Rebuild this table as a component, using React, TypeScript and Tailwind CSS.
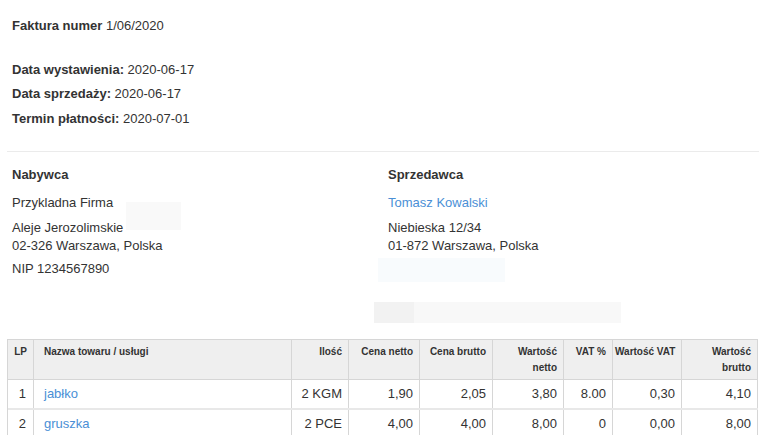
const rows = [
  { lp: '1', name: 'jabłko', qty: '2 KGM', net: '1,90', gross: '2,05', valNet: '3,80', vat: '8.00', valVat: '0,30', valGross: '4,10' },
  { lp: '2', name: 'gruszka', qty: '2 PCE', net: '4,00', gross: '4,00', valNet: '8,00', vat: '0', valVat: '0,00', valGross: '8,00' },
];

const cols = 'grid grid-cols-[26px_258px_57px_71px_73px_71px_49px_69px_76px]';

function Party({ title, lines }: { title: string; lines: React.ReactNode[] }) {
  return (
    <div className="flex-1 px-[5px]">
      <div className="font-bold leading-[18px]">{title}</div>
      {lines}
    </div>
  );
}

export default function App() {
  return (
    <div
      className="relative w-[766px] h-[435px] overflow-hidden bg-white text-[13px] text-[#333]"
      style={{ fontFamily: '"Liberation Sans", Arial, sans-serif' }}
    >
      <div className="px-[12px] pt-[14px]">
        <div className="leading-[24px]">
          <span className="font-bold">Faktura numer</span> 1/06/2020
        </div>
        <div className="mt-[20px] leading-[24.3px]">
          <div><span className="font-bold">Data wystawienia:</span> 2020-06-17</div>
          <div><span className="font-bold">Data sprzedaży:</span> 2020-06-17</div>
          <div><span className="font-bold">Termin płatności:</span> 2020-07-01</div>
        </div>
      </div>

      <div className="mx-[7px] mt-[20px] h-[1px] bg-[#ebebeb]" />

      <div className="mx-[7px] mt-[14px] flex">
        <Party
          title="Nabywca"
          lines={[
            <div key="a" className="mt-[10px] leading-[18px]">Przykladna Firma</div>,
            <div key="b" className="mt-[7px] leading-[18px]">
              Aleje Jerozolimskie
              <br />
              02-326 Warszawa, Polska
            </div>,
            <div key="c" className="mt-[5px] leading-[18px]">NIP 1234567890</div>,
          ]}
        />
        <Party
          title="Sprzedawca"
          lines={[
            <div key="a" className="mt-[10px] leading-[18px] text-[#4a8fd6]">Tomasz Kowalski</div>,
            <div key="b" className="mt-[7px] leading-[18px]">
              Niebieska 12/34
              <br />
              01-872 Warszawa, Polska
            </div>,
          ]}
        />
      </div>

      {/* faint masked fields */}
      <div className="absolute left-[126px] top-[202px] w-[55px] h-[28px] bg-[#f9f9f9]" />
      <div className="absolute left-[378px] top-[258px] w-[127px] h-[24px] bg-[#f8fbfd]" />
      <div className="absolute left-[374px] top-[302px] w-[247px] h-[21px] bg-[#f8f8f8]">
        <div className="w-[40px] h-full bg-[#f2f2f2]" />
      </div>

      <div className="absolute left-[7px] top-[339px] w-[751px] border-l border-t border-[#d6d6d6]">
        <div className={`${cols} bg-[#efefef] text-[10px] font-bold leading-[16px] border-b border-[#d6d6d6]`}>
          {['LP', 'Nazwa towaru / usługi', 'Ilość', 'Cena netto', 'Cena brutto', 'Wartość netto', 'VAT %', 'Wartość VAT', 'Wartość brutto'].map((h, i) => (
            <div
              key={h}
              className={`border-r border-[#d6d6d6] pt-[4px] pb-[3px] min-h-[39px] whitespace-nowrap ${i === 1 ? 'pl-[10px] text-left' : 'pr-[6px] pl-[2px] text-right'}`}
            >
              {h === 'Wartość netto' ? <>Wartość<br />netto</> : h === 'Wartość brutto' ? <>Wartość<br />brutto</> : h}
            </div>
          ))}
        </div>
        {rows.map((r) => (
          <div key={r.lp} className={`${cols} text-[13px] leading-[28px] border-b-2 border-[#e8e8e8]`}>
            <div className="border-r border-[#d6d6d6] pr-[7px] text-right">{r.lp}</div>
            <div className="border-r border-[#d6d6d6] pl-[10px] text-[#4a8fd6]">{r.name}</div>
            {[r.qty, r.net, r.gross, r.valNet, r.vat, r.valVat, r.valGross].map((v, i) => (
              <div key={i} className="border-r border-[#d6d6d6] pr-[6px] text-right">{v}</div>
            ))}
          </div>
        ))}
      </div>
    </div>
  );
}
